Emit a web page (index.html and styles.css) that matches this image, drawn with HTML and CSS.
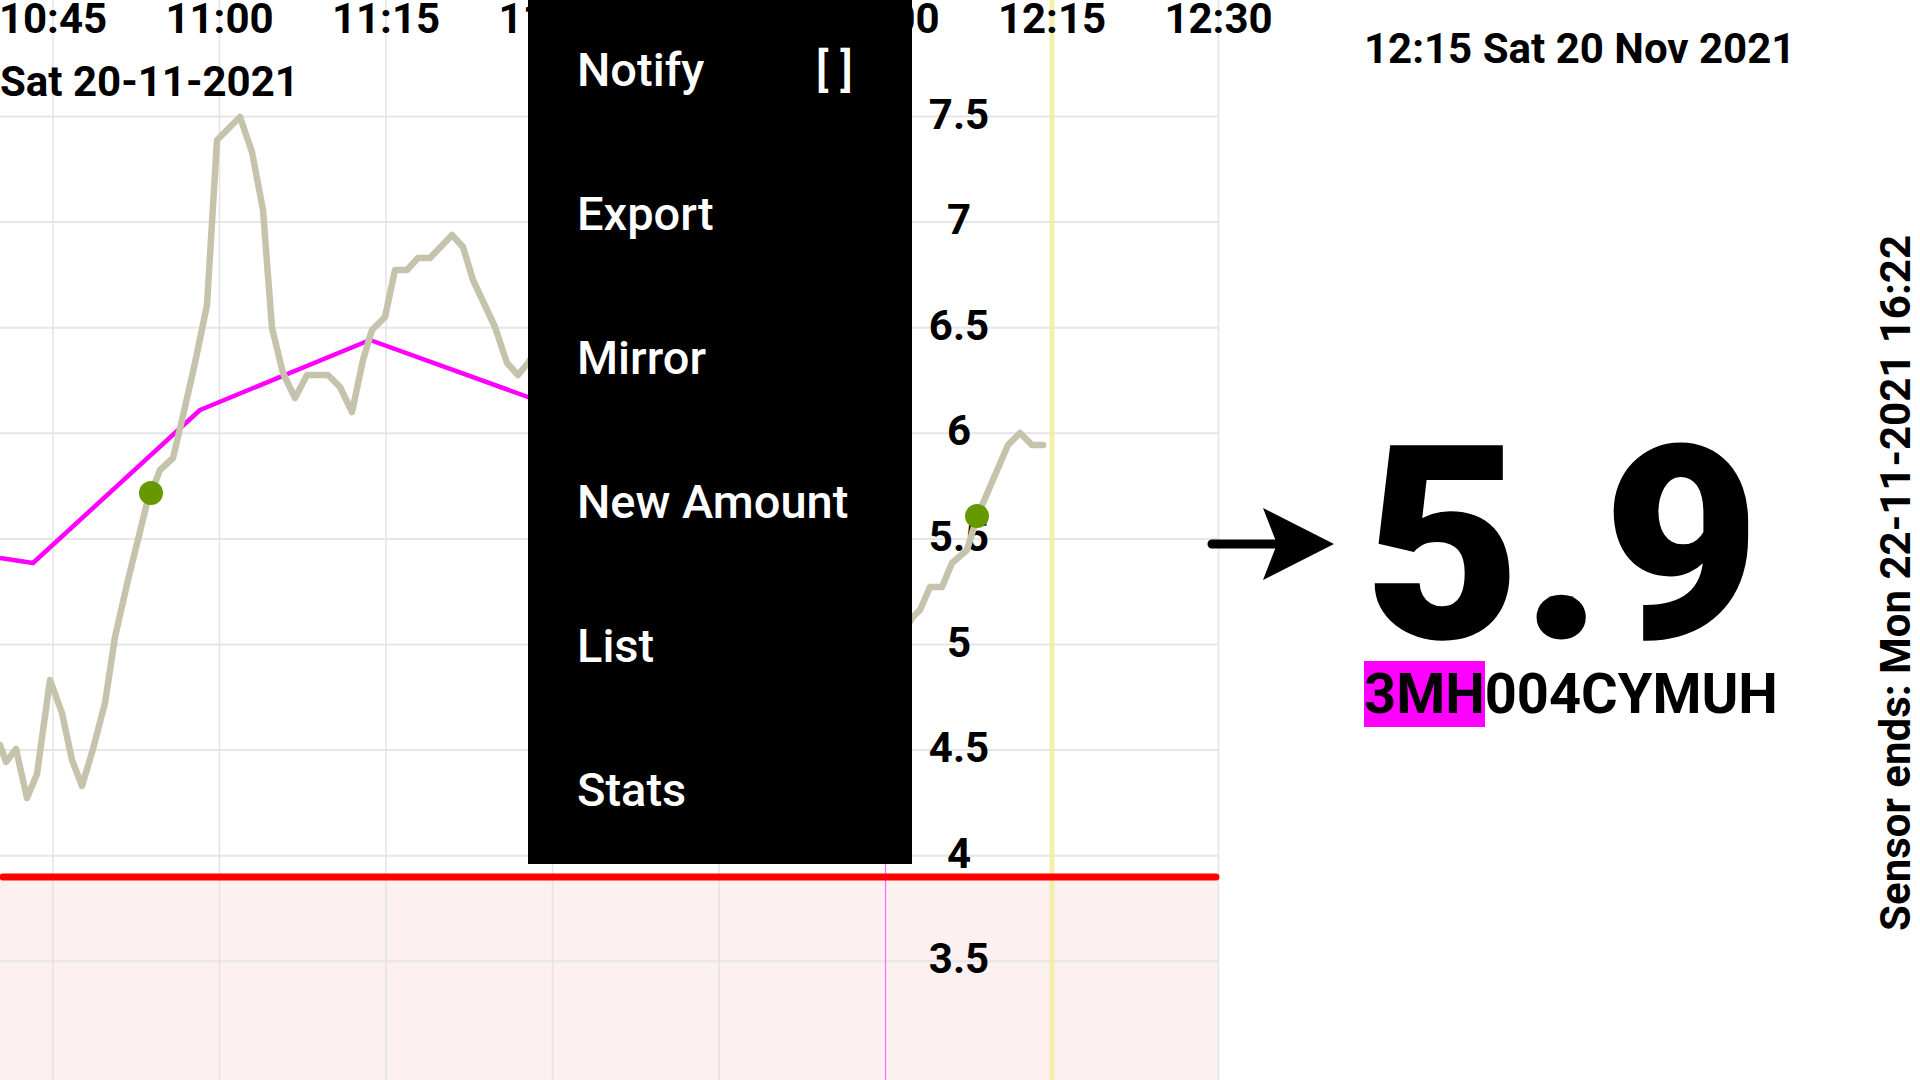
FILE: index.html
```html
<!DOCTYPE html>
<html lang="en">
<head>
<meta charset="utf-8">
<title>Glucose</title>
<link rel="stylesheet" href="styles.css">
</head>
<body>
<div class="screen">
  <div class="chart">
    <svg class="chart-svg" width="1224" height="1080" viewBox="0 0 1224 1080">
      <rect class="low-zone" x="0" y="877" width="1219" height="203"/>
      <g class="grid-h">
        <line x1="0" y1="116.5" x2="1219" y2="116.5"/>
        <line x1="0" y1="222" x2="1219" y2="222"/>
        <line x1="0" y1="327.7" x2="1219" y2="327.7"/>
        <line x1="0" y1="433.3" x2="1219" y2="433.3"/>
        <line x1="0" y1="539" x2="1219" y2="539"/>
        <line x1="0" y1="644.5" x2="1219" y2="644.5"/>
        <line x1="0" y1="750" x2="1219" y2="750"/>
        <line x1="0" y1="855.7" x2="1219" y2="855.7"/>
        <line x1="0" y1="961.3" x2="1219" y2="961.3"/>
      </g>
      <g class="grid-v">
        <line x1="53" y1="0" x2="53" y2="1080"/>
        <line x1="219.5" y1="0" x2="219.5" y2="1080"/>
        <line x1="386" y1="0" x2="386" y2="1080"/>
        <line x1="552.5" y1="0" x2="552.5" y2="1080"/>
        <line x1="719" y1="0" x2="719" y2="1080"/>
        <line x1="1218.5" y1="0" x2="1218.5" y2="1080"/>
      </g>
      <line class="now-line" x1="885.5" y1="0" x2="885.5" y2="1080"/>
      <line class="cursor-line" x1="1052" y1="0" x2="1052" y2="1080"/>
      <line class="low-line" x1="3" y1="877" x2="1216" y2="877"/>
      <g class="time-labels">
        <text x="53" y="33">10:45</text>
        <text x="219.5" y="33">11:00</text>
        <text x="386" y="33">11:15</text>
        <text x="552.5" y="33">11:30</text>
        <text x="719" y="33">11:45</text>
        <text x="885.5" y="33">12:00</text>
        <text x="1052" y="33">12:15</text>
        <text x="1218.5" y="33">12:30</text>
      </g>
      <text class="day-label" x="0" y="96">Sat 20-11-2021</text>
      <g class="value-labels">
        <text x="959" y="128.5">7.5</text>
        <text x="959" y="234">7</text>
        <text x="959" y="339.7">6.5</text>
        <text x="959" y="445.3">6</text>
        <text x="959" y="551">5.5</text>
        <text x="959" y="656.5">5</text>
        <text x="959" y="762">4.5</text>
        <text x="959" y="867.7">4</text>
        <text x="959" y="973.3">3.5</text>
      </g>
      <polyline class="trend-line" points="0,558 33,563 200,410 370,340 528,397 600,420"/>
      <polyline class="sensor-line" points="0,745 6,762 16,749 27,798 37,774 50,680 62,713 72,760 82,786 93,749 105,703 115,637 128,580 147,503 160,470 173,458 182,420 195,363 207,305 217,140 240,117 252,152 263,210 272,328 283,373 295,398 307,375 328,375 340,387 352,412 363,360 372,330 385,317 395,270 407,270 418,258 430,258 452,235 463,247 473,280 495,327 507,363 518,375 528,363 545,335"/>
      <polyline class="sensor-line" points="900,640 912,618 920,610 930,587 942,587 952,563 967,550 977,517 1008,445 1020,433 1032,445 1043,445"/>
      <circle class="scan-dot" cx="151" cy="493" r="12"/>
      <circle class="scan-dot" cx="977" cy="516" r="12"/>
    </svg>
  </div>

  <div class="panel">
    <div class="reading">
      <div class="date">12:15 Sat 20 Nov 2021</div>
      <svg class="arrow" width="130" height="74" viewBox="0 0 130 74">
        <line x1="6" y1="37" x2="74" y2="37" stroke="#000" stroke-width="9" stroke-linecap="round"/>
        <polygon points="128,37 57,1 71,37 57,73" fill="#000"/>
      </svg>
      <div class="value">5.9</div>
      <div class="sensor-id"><span class="id-mark">3MH</span>004CYMUH</div>
    </div>
    <div class="sensor-ends">Sensor ends: Mon 22-11-2021 16:22</div>
  </div>

  <ul class="menu">
    <li class="menu-item"><span>Notify</span><span class="check">[ ]</span></li>
    <li class="menu-item"><span>Export</span></li>
    <li class="menu-item"><span>Mirror</span></li>
    <li class="menu-item"><span>New Amount</span></li>
    <li class="menu-item"><span>List</span></li>
    <li class="menu-item"><span>Stats</span></li>
  </ul>
</div>
</body>
</html>
```

FILE: styles.css
```css
html, body {
  margin: 0;
  padding: 0;
  background: #ffffff;
}

body {
  width: 1920px;
  height: 1080px;
  overflow: hidden;
  font-family: Roboto, "Noto Sans", "Liberation Sans", sans-serif;
  color: #000;
}

.screen {
  display: flex;
  width: 1920px;
  height: 1080px;
}

.chart {
  width: 1200px;
  flex-shrink: 0;
  height: 1080px;
}

.chart-svg {
  display: block;
  overflow: visible;
}

.low-zone {
  fill: #fcf0f0;
}

.grid-h line {
  stroke: #e6e6e6;
  stroke-width: 2;
}

.grid-v line {
  stroke: #e3e3e3;
  stroke-width: 1.5;
}

.now-line {
  stroke: #ff66ff;
  stroke-width: 1.2;
}

.cursor-line {
  stroke: #f3ee9c;
  stroke-width: 5;
  opacity: 0.85;
}

.low-line {
  stroke: #ff0000;
  stroke-width: 7;
  stroke-linecap: round;
}

.time-labels text,
.value-labels text,
.day-label {
  font-family: Roboto, "Liberation Sans", sans-serif;
  font-weight: 700;
  font-size: 42px;
  fill: #000;
}

.time-labels text,
.value-labels text {
  text-anchor: middle;
}

.trend-line {
  fill: none;
  stroke: #ff00ff;
  stroke-width: 4.5;
  stroke-linejoin: round;
}

.sensor-line {
  fill: none;
  stroke: #c5c3ac;
  stroke-width: 6.5;
  stroke-linejoin: round;
  stroke-linecap: round;
}

.scan-dot {
  fill: #669900;
}

.panel {
  flex: 1;
  display: flex;
  min-width: 0;
}

.reading {
  flex: 1;
  display: grid;
  grid-template-columns: 164px auto;
  align-content: start;
  padding-top: 28px;
}

.date {
  grid-column: 2;
  grid-row: 1;
  font-size: 42px;
  font-weight: 700;
  line-height: 1;
  white-space: nowrap;
  margin-bottom: 368px;
}

.arrow {
  grid-column: 1;
  grid-row: 2;
  align-self: center;
  margin-left: 6px;
  margin-bottom: 4px;
  display: block;
}

.value {
  grid-column: 2;
  grid-row: 2;
  font-size: 271px;
  font-weight: 900;
  line-height: 0.8;
  white-space: nowrap;
}

.sensor-id {
  grid-column: 2;
  grid-row: 3;
  margin-top: 11px;
  font-size: 56px;
  font-weight: 700;
  line-height: 1;
  white-space: nowrap;
}

.id-mark {
  background: #ff00ff;
}

.sensor-ends {
  align-self: center;
  margin-top: 86px;
  margin-right: 3px;
  writing-mode: vertical-rl;
  transform: rotate(180deg);
  font-size: 42px;
  font-weight: 700;
  line-height: 1;
  white-space: nowrap;
}

.menu {
  position: absolute;
  left: 528px;
  top: 0;
  width: 384px;
  margin: 0;
  padding: 0;
  list-style: none;
  background: #000;
}

.menu-item {
  box-sizing: border-box;
  display: flex;
  justify-content: space-between;
  align-items: center;
  height: 144px;
  padding: 0 59px 5px 49px;
  color: #fff;
  font-size: 47px;
  font-weight: 500;
  white-space: nowrap;
}
```
